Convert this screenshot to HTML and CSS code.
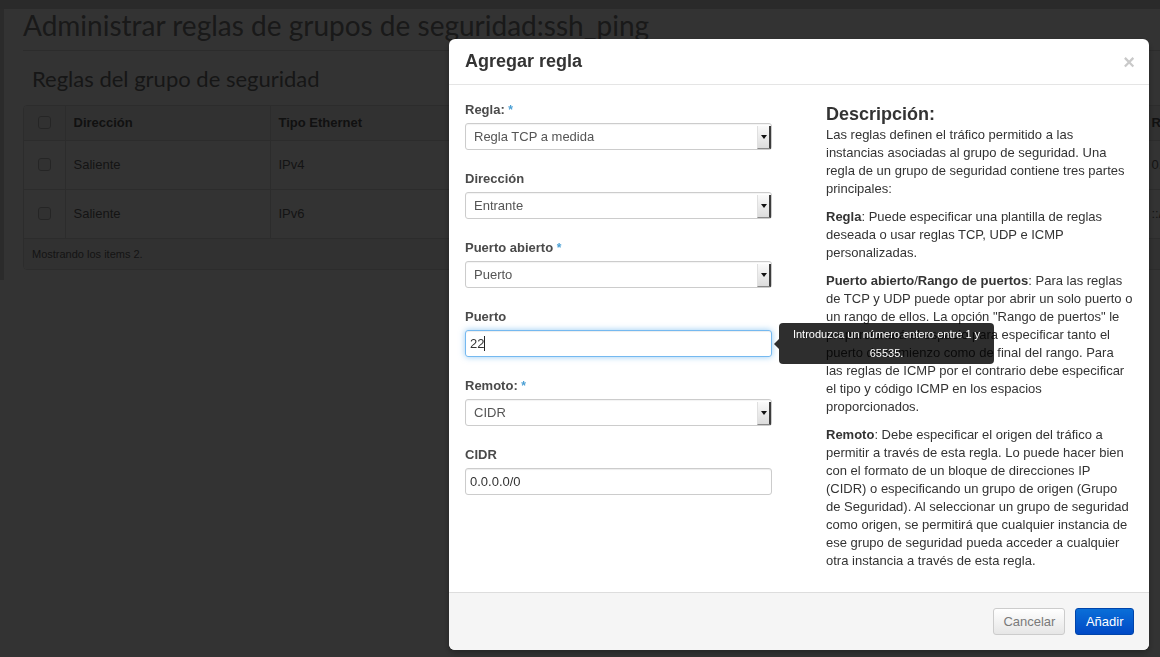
FILE: index.html
```html
<!DOCTYPE html>
<html lang="es">
<head>
<meta charset="utf-8">
<title>Administrar reglas de grupos de seguridad</title>
<link rel="stylesheet" href="styles.css">
</head>
<body>
<div class="page">
  <div class="topbar"></div>
  <div class="layout">
    <div class="side-strip"></div>
    <main class="main">
      <h1 class="page-title">Administrar reglas de grupos de seguridad:ssh_ping</h1>
      <h2 class="section-title">Reglas del grupo de seguridad</h2>
      <div class="table-wrap">
        <table class="rules">
          <colgroup>
            <col class="w-check">
            <col class="w-dir">
            <col class="w-mid">
            <col class="w-mid">
            <col class="w-mid">
            <col class="w-last">
          </colgroup>
          <thead>
            <tr>
              <th><span class="cb"></span></th>
              <th>Dirección</th>
              <th>Tipo Ethernet</th>
              <th>Protocolo IP</th>
              <th>Rango de puertos</th>
              <th>Rango IP remoto</th>
            </tr>
          </thead>
          <tbody>
            <tr>
              <td><span class="cb"></span></td>
              <td>Saliente</td>
              <td>IPv4</td>
              <td>Cualquiera</td>
              <td>-</td>
              <td>0.0.0.0/0 (CIDR)</td>
            </tr>
            <tr>
              <td><span class="cb"></span></td>
              <td>Saliente</td>
              <td>IPv6</td>
              <td>Cualquiera</td>
              <td>-</td>
              <td>::/0 (CIDR)</td>
            </tr>
          </tbody>
        </table>
        <div class="table-foot">Mostrando los items 2.</div>
      </div>
    </main>
  </div>
</div>

<div class="backdrop"></div>

<div class="modal">
  <div class="modal-header">
    <h3 class="modal-title">Agregar regla</h3>
    <span class="close">×</span>
  </div>
  <div class="modal-body">
    <div class="form-col">
      <div class="group">
        <div class="label">Regla: <span class="req">*</span></div>
        <div class="select"><span class="select-text">Regla TCP a medida</span><span class="select-btn"><span class="tri"></span></span></div>
      </div>
      <div class="group">
        <div class="label">Dirección</div>
        <div class="select"><span class="select-text">Entrante</span><span class="select-btn"><span class="tri"></span></span></div>
      </div>
      <div class="group">
        <div class="label">Puerto abierto <span class="req">*</span></div>
        <div class="select"><span class="select-text">Puerto</span><span class="select-btn"><span class="tri"></span></span></div>
      </div>
      <div class="group">
        <div class="label">Puerto</div>
        <div class="field-wrap">
          <div class="input focus"><span class="caret-text">22</span></div>
          <div class="tooltip">Introduzca un número entero entre 1 y 65535.</div>
        </div>
      </div>
      <div class="group">
        <div class="label">Remoto: <span class="req">*</span></div>
        <div class="select"><span class="select-text">CIDR</span><span class="select-btn"><span class="tri"></span></span></div>
      </div>
      <div class="group">
        <div class="label">CIDR</div>
        <div class="input">0.0.0.0/0</div>
      </div>
    </div>
    <div class="desc-col">
      <h3 class="desc-title">Descripción:</h3>
      <p>Las reglas definen el tráfico permitido a las instancias asociadas al grupo de seguridad. Una regla de un grupo de seguridad contiene tres partes principales:</p>
      <p><strong>Regla</strong>: Puede especificar una plantilla de reglas deseada o usar reglas TCP, UDP e ICMP personalizadas.</p>
      <p><strong>Puerto abierto</strong>/<strong>Rango de puertos</strong>: Para las reglas de TCP y UDP puede optar por abrir un solo puerto o un rango de ellos. La opción "Rango de puertos" le proporcionará el espacio para especificar tanto el puerto de comienzo como de final del rango. Para las reglas de ICMP por el contrario debe especificar el tipo y código ICMP en los espacios proporcionados.</p>
      <p><strong>Remoto</strong>: Debe especificar el origen del tráfico a permitir a través de esta regla. Lo puede hacer bien con el formato de un bloque de direcciones IP (CIDR) o especificando un grupo de origen (Grupo de Seguridad). Al seleccionar un grupo de seguridad como origen, se permitirá que cualquier instancia de ese grupo de seguridad pueda acceder a cualquier otra instancia a través de esta regla.</p>
    </div>
  </div>
  <div class="modal-footer">
    <span class="btn">Cancelar</span>
    <span class="btn btn-primary">Añadir</span>
  </div>
</div>
</body>
</html>
```

FILE: styles.css
```css
html, body {
  margin: 0;
  padding: 0;
  width: 1160px;
  height: 657px;
  overflow: hidden;
  background: #fff;
  font-family: "Liberation Sans", Arial, sans-serif;
}

.page {
  width: 1160px;
  height: 657px;
  overflow: hidden;
}

.topbar {
  height: 9px;
  background: #cfcfcf;
}

.layout {
  display: flex;
  align-items: flex-start;
}

.side-strip {
  width: 4px;
  height: 271px;
  flex: none;
  background: #d4d4d4;
}

.main {
  flex: 1;
  padding-left: 19px;
  min-width: 0;
}

.page-title {
  margin: 0;
  font-family: Lato, "Open Sans", sans-serif;
  font-weight: 400;
  font-size: 28px;
  line-height: 1.2;
  color: #7c7c7c;
  padding-bottom: 7px;
  border-bottom: 1px solid #dcdcdc;
  white-space: nowrap;
}

.section-title {
  margin: 15px 0 0 9px;
  font-family: Lato, "Open Sans", sans-serif;
  font-weight: 400;
  font-size: 22px;
  line-height: 1.2;
  color: #707070;
  white-space: nowrap;
}

.table-wrap {
  margin-top: 13px;
  width: 1320px;
  border: 1px solid #dddddd;
  border-radius: 4px;
  overflow: hidden;
}

.rules {
  border-collapse: collapse;
  table-layout: fixed;
  width: 1320px;
  font-size: 13px;
  color: #666;
  white-space: nowrap;
}

.w-check { width: 41px; }
.w-dir { width: 205px; }
.w-mid { width: 291px; }
.w-last { width: 201px; }

.rules th, .rules td {
  text-align: left;
  padding: 0 8px;
  border-left: 1px solid #dddddd;
  border-bottom: 1px solid #dddddd;
  overflow: hidden;
}

.rules th:first-child, .rules td:first-child {
  border-left: 0;
  padding: 0;
}

.rules th {
  height: 34px;
  background: #f4f4f4;
  font-weight: bold;
  color: #555;
}

.rules td {
  height: 48px;
}

.cb {
  display: block;
  width: 11px;
  height: 11px;
  margin: 0 auto;
  border: 1px solid #b8b8b8;
  border-radius: 3px;
  background: #f2f2f2;
}

.table-foot {
  height: 30px;
  line-height: 30px;
  padding-left: 8px;
  font-size: 11px;
  color: #666;
  background: #f4f4f4;
}

.backdrop {
  position: fixed;
  inset: 0;
  background: rgba(0, 0, 0, 0.8);
}

.modal {
  position: fixed;
  left: 449px;
  top: 39px;
  width: 700px;
  height: 611px;
  background: #fff;
  border-radius: 6px;
  display: flex;
  flex-direction: column;
  box-shadow: 0 3px 7px rgba(0, 0, 0, 0.3);
  color: #333;
  overflow: hidden;
}

.modal-header {
  height: 45px;
  flex: none;
  display: flex;
  align-items: center;
  justify-content: space-between;
  padding: 0 16px;
  border-bottom: 1px solid #e5e5e5;
}

.modal-title {
  margin: 0;
  font-size: 18px;
  font-weight: bold;
  color: #333;
}

.close {
  font-size: 20px;
  font-weight: bold;
  color: #c9c9c9;
  line-height: 20px;
  margin-right: -2px;
}

.modal-body {
  flex: 1;
  min-height: 0;
  overflow: hidden;
  display: flex;
  padding: 15px 14px 0 16px;
  gap: 54px;
}

.form-col {
  width: 307px;
  flex: none;
}

.group {
  margin-bottom: 19px;
}

.label {
  font-size: 13px;
  font-weight: bold;
  line-height: 18px;
  color: #4a4a4a;
  margin-bottom: 5px;
  position: relative;
  top: 1px;
}

.req {
  color: #4a9fd4;
  font-size: 12px;
}

.select {
  height: 27px;
  box-sizing: border-box;
  border: 1px solid #cccccc;
  border-radius: 3px;
  display: flex;
  align-items: center;
  justify-content: space-between;
  box-shadow: inset 0 1px 1px rgba(0, 0, 0, 0.05);
}

.select-text {
  padding-left: 8px;
  font-size: 13px;
  color: #555;
}

.select-btn {
  width: 11px;
  height: 22px;
  margin-top: 2px;
  align-self: flex-start;
  background: linear-gradient(#fafafa, #dcdcdc);
  border-left: 1px solid #e0e0e0;
  border-right: 2px solid #3c3c3c;
  border-bottom: 1px solid #888;
  display: flex;
  align-items: center;
  justify-content: center;
}

.tri {
  width: 0;
  height: 0;
  border-left: 3px solid transparent;
  border-right: 3px solid transparent;
  border-top: 4px solid #111;
}

.field-wrap {
  position: relative;
}

.input {
  height: 27px;
  box-sizing: border-box;
  border: 1px solid #cccccc;
  border-radius: 3px;
  padding-left: 4px;
  font-size: 13px;
  line-height: 25px;
  color: #333;
  box-shadow: inset 0 1px 1px rgba(0, 0, 0, 0.075);
}

.input.focus {
  border-color: rgba(82, 168, 236, 0.8);
  box-shadow: inset 0 1px 1px rgba(0, 0, 0, 0.075), 0 0 6px rgba(82, 168, 236, 0.6);
}

.caret-text {
  border-right: 1px solid #222;
}

.tooltip {
  position: absolute;
  left: 314px;
  top: -7px;
  width: 215px;
  height: 41px;
  box-sizing: border-box;
  padding: 2px 8px 0;
  background: rgba(0, 0, 0, 0.82);
  border-radius: 4px;
  color: #fff;
  font-size: 11px;
  line-height: 19px;
  text-align: center;
}

.tooltip::before {
  content: "";
  position: absolute;
  left: -5px;
  top: 16px;
  border-top: 5px solid transparent;
  border-bottom: 5px solid transparent;
  border-right: 5px solid rgba(0, 0, 0, 0.82);
}

.desc-col {
  width: 307.5px;
  flex: none;
  font-size: 13px;
  line-height: 18px;
  color: #333;
}

.desc-title {
  margin: 2px 0 0;
  font-size: 18px;
  line-height: 24px;
  font-weight: bold;
}

.desc-col p {
  margin: 0 0 10px;
}

.modal-footer {
  height: 58px;
  flex: none;
  box-sizing: border-box;
  border-top: 1px solid #dddddd;
  background: #f5f5f5;
  display: flex;
  align-items: center;
  justify-content: flex-end;
  gap: 10px;
  padding: 0 15px;
}

.btn {
  height: 27px;
  box-sizing: border-box;
  display: inline-flex;
  align-items: center;
  justify-content: center;
  padding: 0 9px;
  font-size: 13px;
  border-radius: 3px;
  border: 1px solid #cccccc;
  background: linear-gradient(#ffffff, #e6e6e6);
  color: #7a7a7a;
}

.btn-primary {
  background: linear-gradient(#0a6fd8, #0049c6);
  border-color: #0044aa;
  color: #fff;
  padding: 0 9.5px;
}
```
